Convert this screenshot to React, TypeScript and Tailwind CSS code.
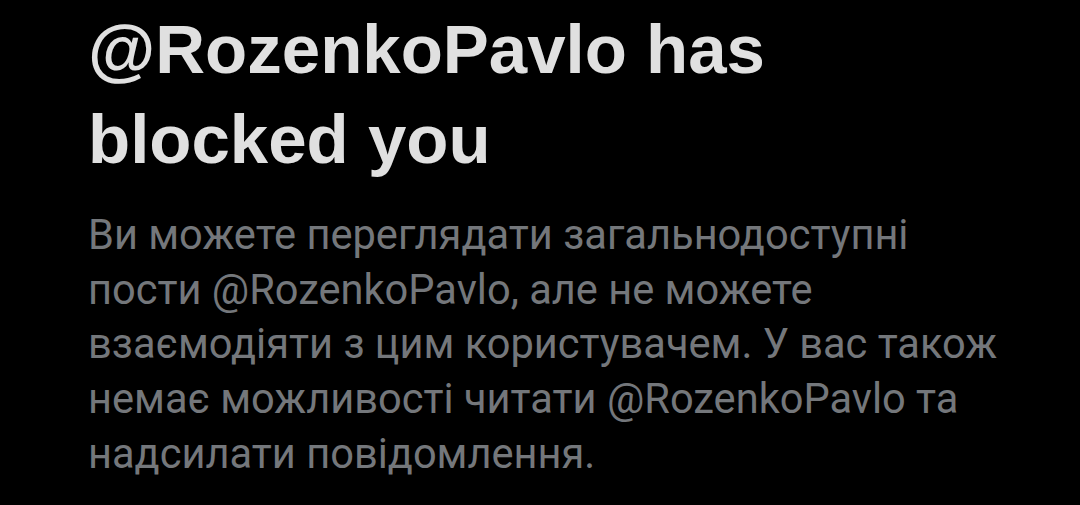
export default function App() {
  return (
    <div className="h-[505px] w-[1080px] overflow-hidden bg-black">
      <div className="pl-[88px] pr-8 pt-[5px]">
        <h1 className="font-['Liberation_Sans',Arial,sans-serif] text-[69px] font-bold leading-[90px] text-[#e0e0e0]">
          @RozenkoPavlo has
          <br />
          blocked you
        </h1>
        <p className="mt-[23px] font-['Roboto',sans-serif] text-[41.6px] leading-[54.7px] text-[#74777b]">
          Ви можете переглядати загальнодоступні
          <br />
          пости @RozenkoPavlo, але не можете
          <br />
          взаємодіяти з цим користувачем. У вас також
          <br />
          немає можливості читати @RozenkoPavlo та
          <br />
          надсилати повідомлення.
        </p>
      </div>
    </div>
  )
}
